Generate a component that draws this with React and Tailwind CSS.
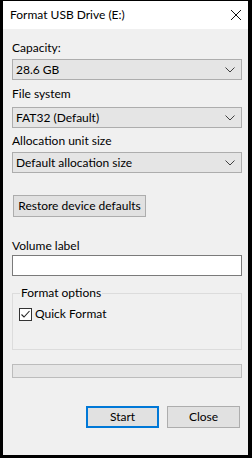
import { useState } from 'react'

function Chevron() {
  return (
    <svg width="10" height="6" viewBox="0 0 10 6" className="shrink-0">
      <path d="M0.5 0.5 L5 5 L9.5 0.5" fill="none" stroke="#404040" strokeWidth="1" />
    </svg>
  )
}

function Combo({ value }) {
  return (
    <div className="flex h-[21px] items-center justify-between border border-[#adadad] bg-[#e5e5e5] pl-[3px] pr-[6px]">
      <span className="leading-4">{value}</span>
      <Chevron />
    </div>
  )
}

export default function App() {
  const [quick, setQuick] = useState(true)

  return (
    <div className="h-[458px] w-[252px] bg-black pt-px pl-[3px] pr-[4px] pb-[3px] font-['Lato',sans-serif] text-[12px] text-black">
      <div className="flex h-full flex-col bg-[#f0f0f0]">
        {/* title bar */}
        <div className="flex h-[28px] shrink-0 items-center justify-between bg-white pl-[7px] pr-[5px]">
          <span className="leading-4">Format USB Drive (E:)</span>
          <svg width="12" height="12" viewBox="0 0 12 12" className="mr-[1px]">
            <path d="M1 1 L11 11 M11 1 L1 11" stroke="#111" strokeWidth="1" />
          </svg>
        </div>

        <div className="flex flex-col pl-[9px] pr-[6px] pt-[11px]">
          <label className="h-4 leading-4">Capacity:</label>
          <div className="mt-[3px]">
            <Combo value="28.6 GB" />
          </div>

          <label className="mt-[6px] h-4 leading-4">File system</label>
          <div className="mt-[5px]">
            <Combo value="FAT32 (Default)" />
          </div>

          <label className="mt-[5px] h-4 leading-4">Allocation unit size</label>
          <div className="mt-[3px]">
            <Combo value="Default allocation size" />
          </div>

          <button className="ml-px mt-[22px] h-[22px] w-[133px] border border-[#adadad] bg-[#e1e1e1] leading-4">
            Restore device defaults
          </button>

          <label className="mt-[21px] h-4 leading-4">Volume label</label>
          <input
            type="text"
            className="mt-px h-[21px] border border-[#7a7a7a] bg-white px-1 outline-none"
          />

          <fieldset className="mt-[9px] h-[65px] border border-[#dcdcdc] px-[6px]">
            <legend className="ml-px px-px leading-4">Format options</legend>
            <label className="mt-[5px] flex h-4 items-center gap-[3px]">
              <button
                type="button"
                onClick={() => setQuick(!quick)}
                className="flex h-[13px] w-[13px] items-center justify-center border border-[#333] bg-white"
              >
                {quick && (
                  <svg width="11" height="11" viewBox="0 0 11 11">
                    <path d="M1.5 5.5 L4 8 L9.5 2" fill="none" stroke="#222" strokeWidth="1.1" />
                  </svg>
                )}
              </button>
              <span className="leading-4">Quick Format</span>
            </label>
          </fieldset>

          <div className="mt-[14px] h-[14px] border border-[#bcbcbc] bg-[#e6e6e6]" />

          <div className="mt-[28px] flex justify-end gap-[8px] pr-[2px]">
            <button className="h-[22px] w-[73px] border-2 border-[#0078d7] bg-[#e1e1e1] leading-4">
              Start
            </button>
            <button className="h-[22px] w-[73px] border border-[#adadad] bg-[#e1e1e1] leading-4">
              Close
            </button>
          </div>
        </div>
      </div>
    </div>
  )
}
